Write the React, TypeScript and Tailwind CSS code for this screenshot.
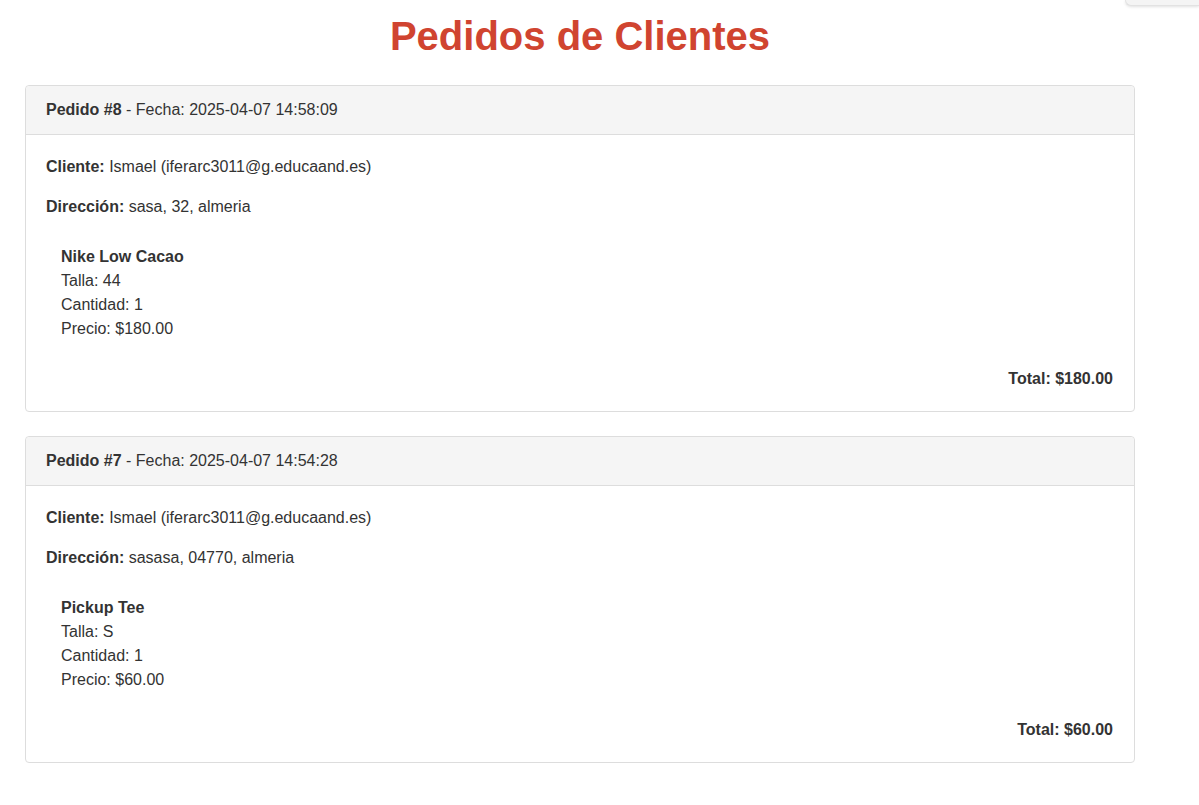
const orders = [
  {
    id: 8,
    date: "2025-04-07 14:58:09",
    client: "Ismael (iferarc3011@g.educaand.es)",
    address: "sasa, 32, almeria",
    items: [{ name: "Nike Low Cacao", size: "44", qty: 1, price: "$180.00" }],
    total: "$180.00",
  },
  {
    id: 7,
    date: "2025-04-07 14:54:28",
    client: "Ismael (iferarc3011@g.educaand.es)",
    address: "sasasa, 04770, almeria",
    items: [{ name: "Pickup Tee", size: "S", qty: 1, price: "$60.00" }],
    total: "$60.00",
  },
]

function OrderCard({ order }: { order: (typeof orders)[number] }) {
  return (
    <div className="mb-6 rounded-[4px] border border-[#dddddd] bg-white">
      <div className="border-b border-[#dddddd] bg-[#f5f5f5] px-5 py-[15px] leading-[18px] rounded-t-[4px]">
        <span className="font-bold">Pedido #{order.id}</span> - Fecha: {order.date}
      </div>
      <div className="px-5 pt-5 pb-5 leading-6">
        <p>
          <span className="font-bold">Cliente:</span> {order.client}
        </p>
        <p className="mt-4">
          <span className="font-bold">Dirección:</span> {order.address}
        </p>
        {order.items.map((item) => (
          <div key={item.name} className="mt-[26px] pl-[15px]">
            <div className="font-bold">{item.name}</div>
            <div>Talla: {item.size}</div>
            <div>Cantidad: {item.qty}</div>
            <div>Precio: {item.price}</div>
          </div>
        ))}
        <p className="mt-[26px] pr-[1px] text-right font-bold">Total: {order.total}</p>
      </div>
    </div>
  )
}

export default function App() {
  return (
    <div className="relative min-h-[805px] bg-white font-['Liberation_Sans',Arial,sans-serif] text-base text-[#333333]">
      <div className="absolute right-0 top-0 h-[6px] w-[74px] rounded-bl-[8px] border-b border-l border-[#e2e2e2] bg-[#f4f4f4] shadow-[0_1px_3px_rgba(0,0,0,0.12)]" />
      <div className="w-[1110px] ml-[25px] pt-[13px]">
        <h1 className="mb-[26px] text-center text-[40px] font-bold leading-[46px] text-[#d04430]">
          Pedidos de Clientes
        </h1>
        {orders.map((order) => (
          <OrderCard key={order.id} order={order} />
        ))}
      </div>
    </div>
  )
}
